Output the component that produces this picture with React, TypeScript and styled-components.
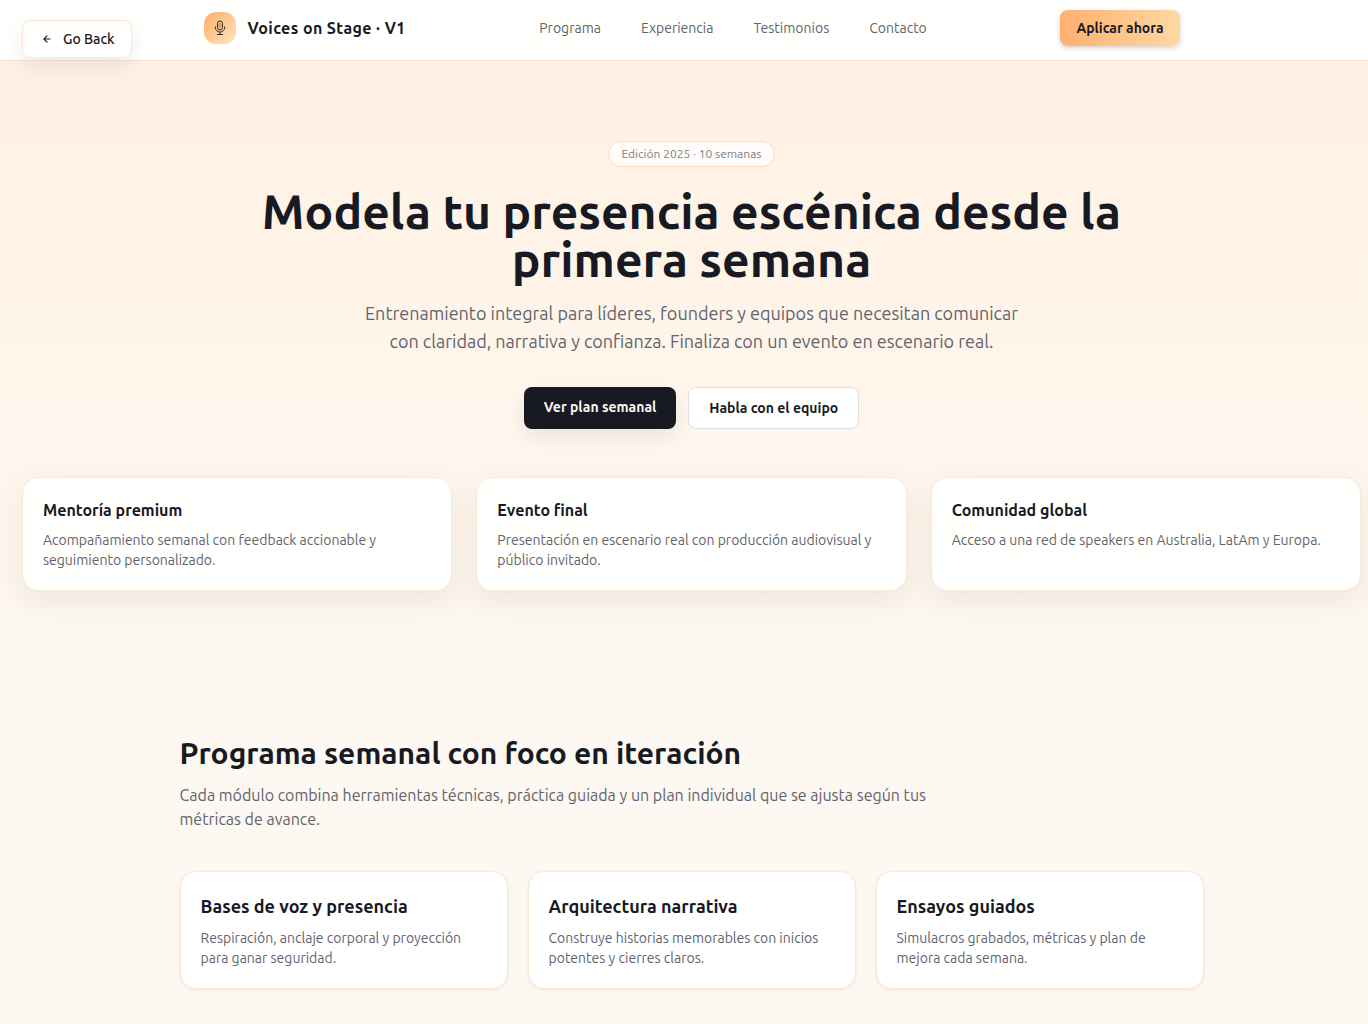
import React from 'react';
import styled, { createGlobalStyle } from 'styled-components';

const GlobalStyle = createGlobalStyle`
  *, *::before, *::after { box-sizing: border-box; }
  html, body { margin: 0; }
  body {
    font-family: Ubuntu, "Noto Sans", sans-serif;
    font-size: 16px;
    line-height: 24px;
    color: #171a23;
    background: #fdf8f2;
  }
  h1, h2, h3, p { margin: 0; }
  a { color: inherit; text-decoration: none; }
`;

const Page = styled.div`
  min-height: 100vh;
  overflow-x: hidden;
`;

const BackButton = styled.button`
  position: absolute;
  z-index: 10;
  top: 20px;
  left: 22px;
  display: flex;
  align-items: center;
  gap: 8px;
  padding: 8px 16px;
  border: 1px solid #fbe6d5;
  border-radius: 8px;
  background: #fffffe;
  color: #171a23;
  font: 500 14px/20px Ubuntu, "Noto Sans", sans-serif;
  box-shadow: 0 8px 20px rgba(23, 26, 35, 0.08);
  cursor: pointer;
`;

const Header = styled.header`
  padding-left: 15px;
  border-bottom: 1px solid #f5e4d6;
  background: #fffffd;
`;

const HeaderInner = styled.div`
  display: flex;
  align-items: center;
  justify-content: space-between;
  max-width: 1024px;
  margin: 0 auto;
  padding: 10px 24px 14px;
`;

const Brand = styled.a`
  display: flex;
  align-items: center;
  gap: 12px;
  font-weight: 600;
  letter-spacing: 0.4px;
`;

const BrandMark = styled.span`
  display: grid;
  place-items: center;
  width: 32px;
  height: 32px;
  border-radius: 12px;
  background: linear-gradient(135deg, #ffae6b, #ffe5bf);
`;

const Nav = styled.nav`
  display: flex;
  gap: 40px;
  font-size: 14px;
  line-height: 20px;
  color: #62646d;
`;

const ApplyLink = styled.a`
  padding: 8px 16px;
  border-radius: 8px;
  background: linear-gradient(90deg, #ffb070, #ffd8a2);
  box-shadow: 0 2px 5px rgba(23, 26, 35, 0.2);
  font-size: 14px;
  line-height: 20px;
  font-weight: 600;
`;

const Hero = styled.section`
  display: flex;
  flex-direction: column;
  align-items: center;
  padding: 80px 7px 80px 22px;
  background: linear-gradient(180deg, #fff0e3, #fff5eb 50%, #fdf8f2);
  text-align: center;
`;

const Badge = styled.span`
  padding: 4px 12px;
  border: 1px solid #ffdcbc;
  border-radius: 999px;
  background: #fffcf9;
  color: #7d7e85;
  font-size: 12px;
  line-height: 16px;
`;

const HeroTitle = styled.h1`
  max-width: 896px;
  margin-top: 20px;
  font-size: 48px;
  line-height: 48px;
  font-weight: 600;
`;

const HeroText = styled.p`
  max-width: 672px;
  margin-top: 16px;
  color: #62646d;
  font-size: 18px;
  line-height: 28px;
`;

const Actions = styled.div`
  display: flex;
  flex-wrap: wrap;
  justify-content: center;
  gap: 12px;
  margin-top: 32px;
`;

const ActionLink = styled.a<{ $solid?: boolean }>`
  padding: 10px 20px;
  border: ${p => (p.$solid ? '0' : '1px solid #dfe0e3')};
  border-radius: 8px;
  background: ${p => (p.$solid ? '#171a23' : '#ffffff')};
  color: ${p => (p.$solid ? '#fdf6ee' : '#171a23')};
  box-shadow: ${p => (p.$solid ? '0 8px 20px rgba(23, 26, 35, 0.08)' : 'none')};
  font-size: 14px;
  line-height: 20px;
  font-weight: 600;
`;

const CardGrid = styled.div<{ $gap: number; $top: number }>`
  display: grid;
  grid-template-columns: repeat(3, minmax(0, 1fr));
  gap: ${p => p.$gap}px;
  width: 100%;
  margin-top: ${p => p.$top}px;
  text-align: left;
`;

const Card = styled.article<{ $raised?: boolean }>`
  padding: 20px;
  border: 1px solid #f7e8d8;
  border-radius: 16px;
  background: ${p => (p.$raised ? '#fffffd' : '#ffffff')};
  box-shadow: ${p =>
    p.$raised ? '0 10px 30px rgba(110, 80, 30, 0.1)' : '0 1px 3px rgba(120, 80, 30, 0.1)'};
`;

const CardTitle = styled.h3<{ $large?: boolean }>`
  font-size: ${p => (p.$large ? 18 : 16)}px;
  line-height: ${p => (p.$large ? 28 : 24)}px;
  font-weight: 600;
`;

const CardText = styled.p`
  margin-top: 8px;
  color: #62646d;
  font-size: 14px;
  line-height: 20px;
`;

const Program = styled.section`
  padding: 64px 0 64px 15px;
`;

const ProgramInner = styled.div`
  max-width: 1024px;
  margin: 0 auto;
`;

const SectionTitle = styled.h2`
  font-size: 30px;
  line-height: 36px;
  font-weight: 600;
`;

const SectionText = styled.p`
  max-width: 768px;
  margin-top: 12px;
  color: #62646d;
`;

const ArrowIcon = () => (
  <svg width="16" height="16" viewBox="0 0 16 16" fill="none" stroke="currentColor" strokeWidth="1.1" strokeLinecap="round" strokeLinejoin="round" aria-hidden="true">
    <path d="M11 8H5M8 4.9L4.9 8L8 11.1" />
  </svg>
);

const MicIcon = () => (
  <svg width="16" height="16" viewBox="0 0 16 16" fill="none" stroke="#33291f" strokeWidth="1" aria-hidden="true">
    <rect x="5.5" y="1" width="5" height="9" rx="2.5" />
    <path d="M7.2 3v5M8.8 3v5" strokeWidth="0.4" />
    <path d="M3.3 6.5v1.3a4.7 4.2 0 0 0 9.4 0V6.5M8 12v2.5M5 14.5h6" />
  </svg>
);

const navItems = ['Programa', 'Experiencia', 'Testimonios', 'Contacto'];

const highlights = [
  { title: 'Mentoría premium', text: 'Acompañamiento semanal con feedback accionable y seguimiento personalizado.' },
  { title: 'Evento final', text: 'Presentación en escenario real con producción audiovisual y público invitado.' },
  { title: 'Comunidad global', text: 'Acceso a una red de speakers en Australia, LatAm y Europa.' },
];

const modules = [
  { title: 'Bases de voz y presencia', text: 'Respiración, anclaje corporal y proyección para ganar seguridad.' },
  { title: 'Arquitectura narrativa', text: 'Construye historias memorables con inicios potentes y cierres claros.' },
  { title: 'Ensayos guiados', text: 'Simulacros grabados, métricas y plan de mejora cada semana.' },
];

export default function App() {
  return (
    <Page>
      <GlobalStyle />
      <BackButton type="button">
        <ArrowIcon />
        Go Back
      </BackButton>
      <Header>
        <HeaderInner>
          <Brand href="#inicio">
            <BrandMark><MicIcon /></BrandMark>
            Voices on Stage · V1
          </Brand>
          <Nav aria-label="Principal">
            {navItems.map(item => (
              <a key={item} href={`#${item.toLowerCase()}`}>{item}</a>
            ))}
          </Nav>
          <ApplyLink href="#contacto">Aplicar ahora</ApplyLink>
        </HeaderInner>
      </Header>
      <main>
        <Hero id="inicio">
          <Badge>Edición 2025 · 10 semanas</Badge>
          <HeroTitle>Modela tu presencia escénica desde la primera semana</HeroTitle>
          <HeroText>
            Entrenamiento integral para líderes, founders y equipos que necesitan comunicar con
            claridad, narrativa y confianza. Finaliza con un evento en escenario real.
          </HeroText>
          <Actions>
            <ActionLink $solid href="#programa">Ver plan semanal</ActionLink>
            <ActionLink href="#contacto">Habla con el equipo</ActionLink>
          </Actions>
          <CardGrid $gap={24} $top={48}>
            {highlights.map(item => (
              <Card key={item.title} $raised>
                <CardTitle>{item.title}</CardTitle>
                <CardText>{item.text}</CardText>
              </Card>
            ))}
          </CardGrid>
        </Hero>
        <Program id="programa">
          <ProgramInner>
            <SectionTitle>Programa semanal con foco en iteración</SectionTitle>
            <SectionText>
              Cada módulo combina herramientas técnicas, práctica guiada y un plan individual que se
              ajusta según tus métricas de avance.
            </SectionText>
            <CardGrid $gap={20} $top={40}>
              {modules.map(item => (
                <Card key={item.title}>
                  <CardTitle $large>{item.title}</CardTitle>
                  <CardText>{item.text}</CardText>
                </Card>
              ))}
            </CardGrid>
          </ProgramInner>
        </Program>
      </main>
    </Page>
  );
}
